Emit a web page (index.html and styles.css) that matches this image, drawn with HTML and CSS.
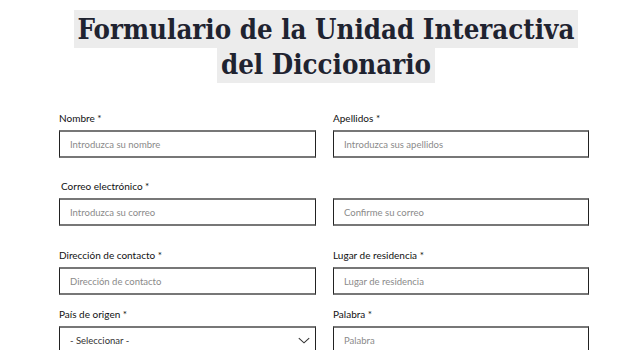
FILE: index.html
```html
<!DOCTYPE html>
<html lang="es">
<head>
<meta charset="utf-8">
<title>Formulario</title>
<link rel="stylesheet" href="styles.css">
</head>
<body>
<div class="page">
  <h1 class="title"><span class="hl">Formulario de la Unidad Interactiva<br>del Diccionario</span></h1>
  <form class="form">
    <div class="row r1">
      <div class="field">
        <label class="lbl">Nombre *</label>
        <div class="box"><span class="ph">Introduzca su nombre</span></div>
      </div>
      <div class="field">
        <label class="lbl">Apellidos *</label>
        <div class="box"><span class="ph">Introduzca sus apellidos</span></div>
      </div>
    </div>
    <div class="row r2">
      <div class="field">
        <label class="lbl ind">Correo electrónico *</label>
        <div class="box"><span class="ph">Introduzca su correo</span></div>
      </div>
      <div class="field">
        <label class="lbl">&nbsp;</label>
        <div class="box"><span class="ph">Confirme su correo</span></div>
      </div>
    </div>
    <div class="row r3">
      <div class="field">
        <label class="lbl">Dirección de contacto *</label>
        <div class="box"><span class="ph">Dirección de contacto</span></div>
      </div>
      <div class="field">
        <label class="lbl">Lugar de residencia *</label>
        <div class="box"><span class="ph">Lugar de residencia</span></div>
      </div>
    </div>
    <div class="row r4">
      <div class="field">
        <label class="lbl">País de origen *</label>
        <div class="box select"><span class="val">- Seleccionar -</span>
          <svg class="chev" width="12" height="7" viewBox="0 0 12 7"><path d="M0.8 1.2 L6 5.8 L11.2 1.2" fill="none" stroke="#333" stroke-width="1.1"/></svg>
        </div>
      </div>
      <div class="field">
        <label class="lbl">Palabra *</label>
        <div class="box"><span class="ph">Palabra</span></div>
      </div>
    </div>
  </form>
</div>
</body>
</html>
```
FILE: styles.css
```css
html, body { margin: 0; padding: 0; background: #fff; overflow: hidden; }
.page { width: 624px; height: 350px; overflow: hidden; }
.title {
  margin: 0;
  padding: 12px 0 0 28px;
  text-align: center;
  font-family: "DejaVu Serif Condensed", "DejaVu Serif", serif;
  font-weight: bold;
  font-size: 27.4px;
  line-height: 35px;
  color: #1f2330;
}
.title .hl {
  background: #ececec;
  padding: 3px 4px;
  -webkit-box-decoration-break: clone;
  box-decoration-break: clone;
}
.form {
  padding: 29px 0 0 59px;
  font-family: Lato, "Liberation Sans", sans-serif;
}
.row {
  display: grid;
  grid-template-columns: 257px 256px;
  column-gap: 17px;
}
.r2 { margin-top: 21px; }
.r3 { margin-top: 22px; }
.r4 { margin-top: 12px; }
.field { display: flex; flex-direction: column; gap: 5px; }
.lbl {
  font-size: 10px;
  line-height: 14px;
  color: #111;
}
.lbl.ind { padding-left: 2px; }
.box {
  height: 28px;
  box-sizing: border-box;
  border-top: 2px solid #777;
  border-bottom: 2px solid #777;
  border-left: 1px solid #222;
  border-right: 1px solid #222;
  display: flex;
  align-items: center;
  padding: 0 10px;
}
.ph { font-size: 9.5px; color: #8a8a8a; }
.select { justify-content: space-between; padding-right: 5px; }
.val { font-size: 9.5px; color: #333; }
.chev { display: block; }
```
